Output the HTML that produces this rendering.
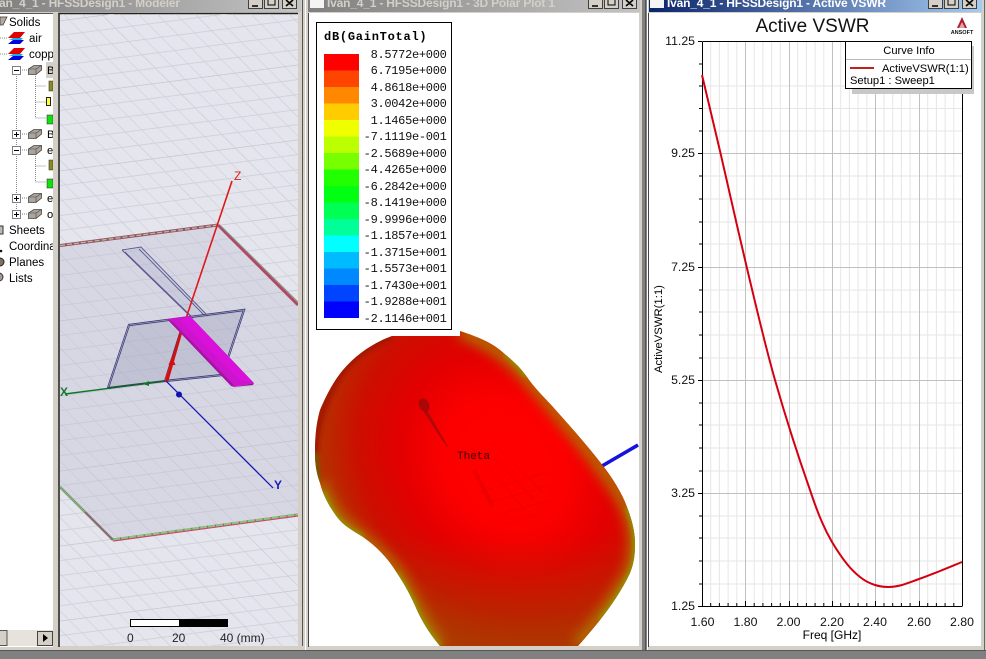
<!DOCTYPE html>
<html><head><meta charset="utf-8"><style>
html,body{margin:0;padding:0;background:#808080}
svg{display:block}
text{font-family:"Liberation Sans",sans-serif}
.m{font-family:"Liberation Mono",monospace;font-size:12px;letter-spacing:-.3px}
.t{font-size:11.150px;fill:#000}
.tt{font-weight:bold;font-size:12px}
.a{font-size:12.300px;fill:#111}
</style></head><body>
<svg width="986" height="659" viewBox="0 0 986 659" xmlns="http://www.w3.org/2000/svg">
<defs>
<linearGradient id="gt" x1="0" x2="1" y1="0" y2="0"><stop offset="0" stop-color="#808080"/><stop offset="1" stop-color="#c4c4c4"/></linearGradient>
<linearGradient id="ga" x1="0" x2="1" y1="0" y2="0"><stop offset="0" stop-color="#0a246a"/><stop offset="1" stop-color="#a6caf0"/></linearGradient>
<pattern id="grid" width="83" height="66.4" patternUnits="userSpaceOnUse" patternTransform="matrix(1 -0.13 1 1 218 225)">
<path d="M16.6 0V66.4M33.2 0V66.4M49.8 0V66.4M66.4 0V66.4M0 13.28H83M0 26.56H83M0 39.84H83M0 53.12H83" stroke="#d0d0da" stroke-width=".8" fill="none"/>
<path d="M0 0V66.4M0 0H83" stroke="#c8c8d2" stroke-width="1.500" fill="none"/>
</pattern>
<radialGradient id="blob" gradientUnits="userSpaceOnUse" cx="0" cy="0" r="1" gradientTransform="translate(505 465) rotate(52) scale(225 190)">
<stop offset="0" stop-color="#ff0000"/><stop offset=".3" stop-color="#fc0000"/><stop offset=".52" stop-color="#e20000"/><stop offset=".72" stop-color="#cc0e00"/><stop offset=".88" stop-color="#b82c00"/><stop offset="1" stop-color="#a84000"/>
</radialGradient>
<linearGradient id="bot" gradientUnits="userSpaceOnUse" x1="0" y1="535" x2="0" y2="650"><stop offset="0" stop-color="#b03000" stop-opacity="0"/><stop offset="1" stop-color="#a83c00" stop-opacity=".75"/></linearGradient>
<filter id="b6" x="-20%" y="-20%" width="140%" height="140%"><feGaussianBlur stdDeviation="6"/></filter>
<filter id="b2" x="-20%" y="-20%" width="140%" height="140%"><feGaussianBlur stdDeviation="2"/></filter>
<clipPath id="bc"><path d="M460 331C478 337 490 342 500 350C512 360 520 367 527 377C535 389 545 398 553 407C570 426 586 444 600 462C612 477 622 493 627 507C632 520 635 532 635 543C635 555 634 563 630 573C622 590 611 606 600 620C592 630 585 638 578 646H440C430 634 423 623 417 610C411 596 405 585 397 573C388 558 376 546 363 537C352 530 344 526 337 517C329 506 323 495 320 483C316 472 315 463 315 453C315 438 316 424 320 410C326 396 333 382 343 370C355 356 370 345 387 338L392 336H460Z"/></clipPath>
<clipPath id="vp"><rect x="60" y="14" width="238" height="632"/></clipPath>
<clipPath id="tree"><rect x="0" y="14" width="53" height="620"/></clipPath>
</defs>

<rect width="986" height="659" fill="#808080"/>
<!-- window frames -->
<rect x="0" y="0" width="305" height="650" fill="#d4d0c8"/>
<rect x="305" y="0" width="337" height="650" fill="#d4d0c8"/>
<rect x="647" y="0" width="339" height="650" fill="#d4d0c8"/>
<rect x="642" y="0" width="5" height="659" fill="#808080"/>
<path d="M302.500 0V650M645.500 0V650" stroke="#555" stroke-width="1"/>
<path d="M305.500 0V650M647.500 0V650" stroke="#fff" stroke-width="1"/>
<path d="M984.500 0V650" stroke="#666"/>
<rect x="0" y="646" width="305" height="4" fill="#d4d0c8"/>
<path d="M0 650.500H986" stroke="#555"/>

<!-- title bars -->
<rect x="0" y="0" width="301" height="12" fill="url(#gt)"/>
<rect x="308" y="0" width="332" height="12" fill="url(#gt)"/>
<rect x="649" y="0" width="333" height="12" fill="url(#ga)"/>
<rect x="310" y="0" width="14" height="8" fill="#f4f4f4"/>
<rect x="650" y="0" width="14" height="8" fill="#f4f4f4"/>
<text class="tt" x="-1" y="7" fill="#d4d0c8" textLength="181">an_4_1 - HFSSDesign1 - Modeler</text>
<text class="tt" x="327" y="7" fill="#d4d0c8" textLength="228">Ivan_4_1 - HFSSDesign1 - 3D Polar Plot 1</text>
<text class="tt" x="667" y="7" fill="#fff" textLength="219">Ivan_4_1 - HFSSDesign1 - Active VSWR</text>
<!-- caption buttons -->
<g fill="#d4d0c8" stroke="#404040" stroke-width="1">
<rect x="248.500" y="-4" width="14" height="12.500"/><rect x="264.500" y="-4" width="14" height="12.500"/><rect x="282.500" y="-4" width="14" height="12.500"/>
<rect x="588.500" y="-4" width="14" height="12.500"/><rect x="604.500" y="-4" width="14" height="12.500"/><rect x="622.500" y="-4" width="14" height="12.500"/>
<rect x="928.500" y="-4" width="14" height="12.500"/><rect x="944.500" y="-4" width="14" height="12.500"/><rect x="962.500" y="-4" width="14" height="12.500"/>
</g>
<g stroke="#000" stroke-width="1.600" fill="none">
<path d="M252 6H258M592 6H598M932 6H938"/>
<path d="M268 0V5H275V0M608 0V5H615V0M948 0V5H955V0" stroke-width="1"/>
<path d="M286 0L293 6M293 0L286 6M626 0L633 6M633 0L626 6M966 0L973 6M973 0L966 6"/>
</g>

<!-- tree panel -->
<rect x="0" y="13" width="53" height="634" fill="#fff"/>
<path d="M0 13.500H53" stroke="#555"/>
<g clip-path="url(#tree)">
<path d="M16.500 72V218M20 70H30M35.500 76V118M35.500 86H46M35.500 102H46M35.500 118H46M20 134H30M20 150H30M35.500 156V182M35.500 166H46M35.500 182H46M20 198H30M20 214H30" stroke="#888" stroke-dasharray="1 1" fill="none"/>
<path d="M0 38H8M0 54H8" stroke="#888" stroke-dasharray="1 1"/>
<path d="M0 17L7 17L3 25L0 25Z" fill="#b4aaa4" stroke="#333" stroke-width=".7"/>
<text class="t" x="9" y="26" style="font-size:11.500px">Solids</text>
<text class="t" x="29" y="42" style="font-size:11.500px">air</text>
<text class="t" x="29" y="58" style="font-size:11.500px">copper</text>
<g id="ic"><path d="M8 38L14 32H25L20 38Z" fill="#e00000"/><path d="M9 40L13 38H23L21 40Z" fill="#10b0e8"/><path d="M8 44L13 40H24L20 44Z" fill="#0000d8"/></g>
<use href="#ic" y="16"/>
<g fill="#fff" stroke="#808080"><rect x="12.500" y="66.500" width="8" height="8"/><rect x="12.500" y="130.500" width="8" height="8"/><rect x="12.500" y="146.500" width="8" height="8"/><rect x="12.500" y="194.500" width="8" height="8"/><rect x="12.500" y="210.500" width="8" height="8"/></g>
<path d="M14 70.500H19M14 134.500H19M16.500 132V137M14 150.500H19M14 198.500H19M16.500 196V201M14 214.500H19M16.500 212V217" stroke="#000" fill="none"/>
<g id="br"><path d="M28.500 74.500V69L34 65.500H41.500V70L36 74.500Z" fill="#aca49c" stroke="#444" stroke-width=".8"/><path d="M28.500 69H36V74.500M36 69L41.500 65.500" fill="none" stroke="#444" stroke-width=".6"/></g>
<use href="#br" y="64"/><use href="#br" y="80"/><use href="#br" y="128"/><use href="#br" y="144"/>
<rect x="46" y="62" width="7" height="16" fill="#d4d0c8"/>
<text class="t" x="47" y="74">B</text><text class="t" x="47" y="138">B</text><text class="t" x="47" y="154">e</text><text class="t" x="47" y="202">e</text><text class="t" x="47" y="218">o</text>
<path d="M49 81H53V91H49Z" fill="#8a8a20" stroke="#333" stroke-width=".6"/>
<path d="M49 160H53V170H49Z" fill="#8a8a20" stroke="#333" stroke-width=".6"/>
<rect x="46.500" y="97.500" width="4" height="8" fill="#ffff40" stroke="#222"/>
<rect x="47" y="115" width="6" height="9" fill="#10e010" stroke="#222" stroke-width=".5"/>
<rect x="47" y="179" width="6" height="9" fill="#10e010" stroke="#222" stroke-width=".5"/>
<rect x="-3" y="226" width="6" height="8" fill="#c0b8b0" stroke="#333"/>
<text class="t" x="9" y="234" style="font-size:11.500px">Sheets</text>
<circle cx="1" cy="251" r="1.300" fill="#111"/>
<text class="t" x="9" y="250" style="font-size:11.500px">Coordinate</text>
<circle cx="0" cy="262" r="4" fill="#807060" stroke="#222"/>
<text class="t" x="9" y="266" style="font-size:11.500px">Planes</text>
<circle cx="-1" cy="277" r="4" fill="#a89890" stroke="#333"/>
<text class="t" x="9" y="282" style="font-size:11.500px">Lists</text>
</g>
<!-- tree scrollbar -->
<rect x="0" y="630" width="53" height="16" fill="#e6e3dc"/>
<rect x="-3" y="630.500" width="10" height="15" fill="#d4d0c8" stroke="#555"/>
<rect x="37.500" y="631.500" width="15" height="14" fill="#d4d0c8" stroke="#444"/>
<path d="M43 634L43 642L48 638Z" fill="#000"/>

<!-- viewport -->
<rect x="60" y="14" width="238" height="632" fill="#e5e5ee"/>
<path d="M59 647V13.500H298" fill="none" stroke="#222" stroke-width="1.500"/>
<g clip-path="url(#vp)">
<rect x="60" y="14" width="238" height="632" fill="url(#grid)"/>
<path d="M60 245L218 225L298 305V515L113 540L60 487Z" fill="#b4b4cc" fill-opacity=".28"/>
<path d="M60 245.500L218 225" stroke="#a04a68" stroke-width="3"/>
<path d="M60 245.500L218 225" stroke="#9ec890" stroke-width="1.300" stroke-dasharray="5 2"/>
<path d="M218 225L298 305" stroke="#b04868" stroke-width="3"/>
<path d="M221 226L298 302" stroke="#8a9a80" stroke-width="1"/>
<path d="M113 540L298 515" stroke="#d04070" stroke-width="3.200"/>
<path d="M113 539.500L298 514.500" stroke="#78d078" stroke-width="2" stroke-dasharray="7 1"/>
<path d="M60 487L113 540" stroke="#8a7070" stroke-width="2.500"/>
<path d="M60 487L85 512" stroke="#70c070" stroke-width="1.500"/>
<!-- feed slot outline -->
<path d="M122 250L141 247L208 316L190 316Z" fill="#b0b0d0" fill-opacity=".3"/>
<path d="M122 250L141 247L208 316M122 250L190 316M125 252L193 318M139 249L205 316" stroke="#5a5a90" stroke-width=".9" fill="none"/>
<!-- patch -->
<path d="M108 388L129 325L244 310L222 376L165 381Z" fill="#a8a8c4" fill-opacity=".45"/>
<path d="M108 388L129 325L168 320M129 325L244 310L222 376M222 375L165 381" stroke="#3c3c78" stroke-width="2.200" fill="none"/>
<path d="M108 388L129 325L168 320M129 325L244 310L222 376M222 375L165 381" stroke="#b8b8d0" stroke-width=".6" fill="none"/>
<path d="M181 330L165 381" stroke="#3c3c78" stroke-width="2"/>
<!-- z axis -->
<path d="M232 181L165 381" stroke="#e01818" stroke-width="1.600"/>
<path d="M183 325L167 381" stroke="#d01010" stroke-width="2.800"/>
<path d="M172 359l2 5-4 0Z" fill="#d01010" stroke="#d01010" stroke-width="2"/>
<text x="234" y="180" fill="#d82020" font-size="12">Z</text>
<!-- pink strip -->
<path d="M167 319L190 316L254 383L234 387Z" fill="#cc14cc"/>
<path d="M234 387L254 383L253 385L234 387Z" fill="#a010a0"/>
<path d="M167 319L231 386L234 387L233 384L173 322Z" fill="#a414a4"/>
<path d="M180 320L240 380L253 383L190 316Z" fill="#e010e0" opacity=".7"/>
<!-- x axis -->
<path d="M65 394L165 381" stroke="#0c7a24" stroke-width="1.400"/>
<path d="M108 388L165 381" stroke="#1a5a3a" stroke-width="2"/>
<path d="M143 384l6 -3 0 5Z" fill="#0c7a24"/>
<text x="60" y="396" fill="#1a7a30" font-size="12" font-weight="bold">X</text>
<!-- y axis -->
<path d="M166 381L273 488" stroke="#1010b0" stroke-width="1.200"/>
<circle cx="179" cy="394.500" r="3" fill="#1010b0"/>
<text x="274" y="489" fill="#1818b8" font-size="12" font-weight="bold">Y</text>
<!-- scale -->
<rect x="130.500" y="619.500" width="97" height="7" fill="#fff" stroke="#000"/>
<rect x="179" y="619" width="49" height="8" fill="#000"/>
<text x="127" y="642" font-size="12" fill="#222">0</text>
<text x="172" y="642" font-size="12" fill="#222">20</text>
<text x="220" y="642" font-size="12" fill="#222">40 (mm)</text>
</g>

<!-- polar plot client -->
<rect x="309" y="13" width="330" height="633" fill="#fff"/>
<path d="M308.500 647V13" fill="none" stroke="#444"/>
<path d="M602 466L638 445" stroke="#1414dc" stroke-width="3.600"/>
<g clip-path="url(#bc)">
<rect x="300" y="325" width="345" height="325" fill="url(#blob)"/>
<rect x="300" y="535" width="345" height="115" fill="url(#bot)"/>
<!-- upper-left dark rim -->
<path d="M315 453C315 424 326 396 343 370C355 356 370 345 392 336" fill="none" stroke="#a01800" stroke-width="7" filter="url(#b2)"/>
<path d="M320 483C316 472 315 463 315 453" fill="none" stroke="#705a00" stroke-width="6" filter="url(#b2)"/>
<!-- olive rims -->
<g fill="none" filter="url(#b6)" stroke="#b07000" stroke-width="13">
<path d="M460 331C490 342 512 360 527 377C570 426 612 477 627 507C640 535 634 563 630 573C611 606 592 630 578 646"/>
<path d="M440 646C423 623 411 596 397 573C376 546 344 526 337 517C329 506 323 495 320 483"/>
</g>
<g fill="none" filter="url(#b2)" stroke="#8a9c00" stroke-width="4">
<path d="M505 353C512 360 520 367 527 377"/>
<path d="M627 507C632 520 635 532 635 543C635 555 634 563 630 573C622 590 611 606 600 620"/>
<path d="M440 646C430 634 423 623 417 610C411 596 405 585 397 573"/>
<path d="M363 537C352 530 344 526 337 517C330 508 326 500 324 492"/>
</g>
<g stroke="#d80000" stroke-width=".6" fill="none" opacity=".55">
<path d="M472 448L525 510M482 446L535 500M492 442L542 492M480 492L548 472M490 502L552 485M500 514L552 500M505 524L548 512"/>
</g>
<path d="M474 470L492 505" stroke="#d00000" stroke-width="4" opacity=".35"/>
<ellipse cx="424" cy="405" rx="5" ry="7" fill="#a80808" transform="rotate(-25 424 405)"/>
<path d="M427 410L450 450L442 440L424 412Z" fill="#b00808"/>
</g>
<text x="457" y="459" font-size="11" fill="#400000" style="font-family:'Liberation Mono',monospace">Theta</text>
<!-- legend -->
<rect x="309" y="13" width="151" height="323" fill="#fff"/>
<rect x="316.500" y="22.500" width="135" height="307" fill="#fff" stroke="#000"/>
<text x="324" y="40" style="font-family:'Liberation Mono',monospace;font-weight:bold;font-size:12px;letter-spacing:.75px">dB(GainTotal)</text>
<g>
<rect x="324" y="54" width="35" height="17" fill="#ff0000"/><rect x="324" y="70.500" width="35" height="17" fill="#ff4400"/><rect x="324" y="87" width="35" height="17" fill="#ff8800"/><rect x="324" y="103.500" width="35" height="17" fill="#ffcc00"/><rect x="324" y="120" width="35" height="17" fill="#f0ff00"/><rect x="324" y="136.500" width="35" height="17" fill="#bbff00"/><rect x="324" y="153" width="35" height="17" fill="#77ff00"/><rect x="324" y="169.500" width="35" height="17" fill="#22ff00"/><rect x="324" y="186" width="35" height="17" fill="#00ff11"/><rect x="324" y="202.500" width="35" height="17" fill="#00ff55"/><rect x="324" y="219" width="35" height="17" fill="#00ff99"/><rect x="324" y="235.500" width="35" height="17" fill="#00ffff"/><rect x="324" y="252" width="35" height="17" fill="#00bbff"/><rect x="324" y="268.500" width="35" height="17" fill="#0088ff"/><rect x="324" y="285" width="35" height="17" fill="#0044ff"/><rect x="324" y="301.500" width="35" height="16.500" fill="#0000ff"/>
</g>
<g text-anchor="end" fill="#111">
<text class="m" x="446.500" y="58">8.5772e+000</text><text class="m" x="446.500" y="74">6.7195e+000</text><text class="m" x="446.500" y="91">4.8618e+000</text><text class="m" x="446.500" y="107">3.0042e+000</text><text class="m" x="446.500" y="124">1.1465e+000</text><text class="m" x="446.500" y="140">-7.1119e-001</text><text class="m" x="446.500" y="157">-2.5689e+000</text><text class="m" x="446.500" y="173">-4.4265e+000</text><text class="m" x="446.500" y="190">-6.2842e+000</text><text class="m" x="446.500" y="206">-8.1419e+000</text><text class="m" x="446.500" y="223">-9.9996e+000</text><text class="m" x="446.500" y="239">-1.1857e+001</text><text class="m" x="446.500" y="256">-1.3715e+001</text><text class="m" x="446.500" y="272">-1.5573e+001</text><text class="m" x="446.500" y="289">-1.7430e+001</text><text class="m" x="446.500" y="305">-1.9288e+001</text><text class="m" x="446.500" y="322">-2.1146e+001</text>
</g>

<!-- VSWR client -->
<rect x="649" y="13" width="332" height="633" fill="#fff"/>
<path d="M648.500 647V13" fill="none" stroke="#444"/>
<text x="812.500" y="32" text-anchor="middle" font-size="19" fill="#111">Active VSWR</text>
<path d="M962 17L967 28H957Z" fill="#a82030"/><path d="M962 22L965 28H959Z" fill="#e8a0a0"/>
<text x="962" y="34" text-anchor="middle" font-size="5.500" font-weight="bold" fill="#111">ANSOFT</text>
<!-- grid -->
<path d="M710.700 41V606M719.400 41V606M728.100 41V606M736.800 41V606M754.200 41V606M762.900 41V606M771.600 41V606M780.300 41V606M797.700 41V606M806.400 41V606M815.100 41V606M823.800 41V606M840.700 41V606M849.400 41V606M858.100 41V606M866.800 41V606M884 41V606M892.700 41V606M901.400 41V606M910.100 41V606M927.700 41V606M936.400 41V606M945.100 41V606M953.800 41V606M702 86H962M702 108.500H962M702 131H962M702 176H962M702 199H962M702 222H962M702 244H962M702 290H962M702 312H962M702 335H962M702 358H962M702 403H962M702 425H962M702 448H962M702 471H962M702 516H962M702 538H962M702 561H962M702 584H962" stroke="#e6e6e6" fill="none"/>
<path d="M745.500 41V606M789.500 41V606M832.500 41V606M875.500 41V606M919.500 41V606M702 153.500H962M702 267.500H962M702 380.500H962M702 493.500H962" stroke="#c0c0c0" fill="none"/>
<path d="M702.500 41.500H962.500V606M702.500 41.500V606.500H962.500" fill="none" stroke="#000"/>
<g stroke="#000" fill="none">
<path d="M698 41.500H702M698 153.500H702M698 267.500H702M698 380.500H702M698 493.500H702M698 606.500H702M699 64H702M699 86H702M699 108.500H702M699 131H702M699 176H702M699 199H702M699 222H702M699 244H702M699 290H702M699 312H702M699 335H702M699 358H702M699 403H702M699 425H702M699 448H702M699 471H702M699 516H702M699 538H702M699 561H702M699 584H702"/>
<path d="M745.500 601V606M789.500 601V606M832.500 601V606M875.500 601V606M919.500 601V606M710.700 603V606M719.400 603V606M728.100 603V606M736.800 603V606M754.200 603V606M762.900 603V606M771.600 603V606M780.300 603V606M797.700 603V606M806.400 603V606M815.100 603V606M823.800 603V606M840.700 603V606M849.400 603V606M858.100 603V606M866.800 603V606M884 603V606M892.700 603V606M901.400 603V606M910.100 603V606M927.700 603V606M936.400 603V606M945.100 603V606M953.800 603V606"/>
</g>
<g text-anchor="end"><text class="a" x="695" y="45">11.25</text><text class="a" x="695" y="157">9.25</text><text class="a" x="695" y="271">7.25</text><text class="a" x="695" y="384">5.25</text><text class="a" x="695" y="497">3.25</text><text class="a" x="695" y="610">1.25</text></g>
<g text-anchor="middle"><text class="a" x="702.500" y="626">1.60</text><text class="a" x="745.500" y="626">1.80</text><text class="a" x="788.500" y="626">2.00</text><text class="a" x="832" y="626">2.20</text><text class="a" x="875" y="626">2.40</text><text class="a" x="919" y="626">2.60</text><text class="a" x="962" y="626">2.80</text></g>
<text class="t" x="832" y="639" text-anchor="middle" style="font-size:12px">Freq [GHz]</text>
<text class="t" transform="translate(662 373) rotate(-90)" style="font-size:11.300px">ActiveVSWR(1:1)</text>
<path d="M702 75C705.100 88.200 713.200 122 720.700 154C728.200 186 737.700 229.300 746.700 267C755.700 304.700 764.400 342.800 775 380C785.600 417.200 800.500 463 810 490C819 517 825 530 832 542C838 552 843 559 847 564C851 569 855 573 860 577C865 581 870 583.500 875 585C879.700 586.500 883.800 586.900 888 587C892.200 587.100 894.800 586.800 900 585.500C905.200 584.200 912.300 581.400 919 579C925.700 576.600 932.800 573.800 940 571C947.200 568.200 954.700 565 962 562" fill="none" stroke="#d40012" stroke-width="2"/>
<!-- curve info -->
<rect x="852" y="46" width="122" height="48" fill="#c8c8c8"/>
<rect x="845.500" y="41.500" width="126" height="47" fill="#fff" stroke="#000"/>
<path d="M846 59.500H971" stroke="#bbb"/>
<text class="t" x="909" y="54" text-anchor="middle">Curve Info</text>
<path d="M850 68H874" stroke="#c81e1e" stroke-width="2"/>
<text class="t" x="882" y="72">ActiveVSWR(1:1)</text>
<text class="t" x="850" y="84">Setup1 : Sweep1</text>
</svg>
</body></html>
